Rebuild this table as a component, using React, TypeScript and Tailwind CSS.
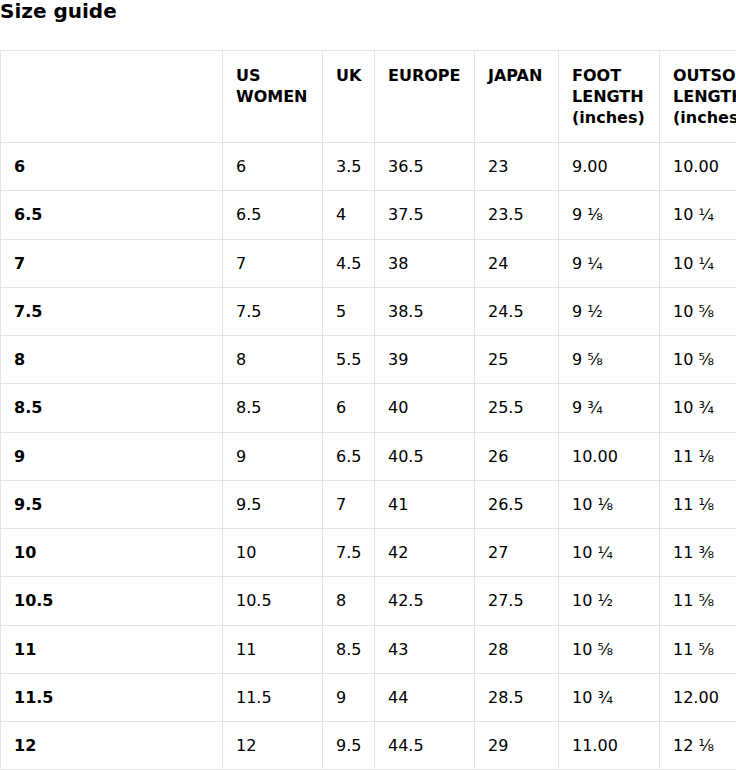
import React from "react";

const rows: string[][] = [
  ["6", "6", "3.5", "36.5", "23", "9.00", "10.00"],
  ["6.5", "6.5", "4", "37.5", "23.5", "9 ⅛", "10 ¼"],
  ["7", "7", "4.5", "38", "24", "9 ¼", "10 ¼"],
  ["7.5", "7.5", "5", "38.5", "24.5", "9 ½", "10 ⅝"],
  ["8", "8", "5.5", "39", "25", "9 ⅝", "10 ⅝"],
  ["8.5", "8.5", "6", "40", "25.5", "9 ¾", "10 ¾"],
  ["9", "9", "6.5", "40.5", "26", "10.00", "11 ⅛"],
  ["9.5", "9.5", "7", "41", "26.5", "10 ⅛", "11 ⅛"],
  ["10", "10", "7.5", "42", "27", "10 ¼", "11 ⅜"],
  ["10.5", "10.5", "8", "42.5", "27.5", "10 ½", "11 ⅝"],
  ["11", "11", "8.5", "43", "28", "10 ⅝", "11 ⅝"],
  ["11.5", "11.5", "9", "44", "28.5", "10 ¾", "12.00"],
  ["12", "12", "9.5", "44.5", "29", "11.00", "12 ⅛"],
];

const widths = [222, 100, 52, 100, 84, 101, 110];

const headers: React.ReactNode[] = [
  "",
  <>US<br />WOMEN</>,
  "UK",
  "EUROPE",
  "JAPAN",
  <>FOOT<br />LENGTH<br />(inches)</>,
  <>OUTSOLE<br />LENGTH<br />(inches)</>,
];

export default function App() {
  return (
    <div
      className="w-[736px] h-[770px] overflow-hidden bg-white text-black"
      style={{ fontFamily: '"DejaVu Sans", sans-serif' }}
    >
      <h1 className="text-[20px] leading-[22px] font-bold mb-[28px]">Size guide</h1>
      <table className="border-collapse table-fixed w-[769px]">
        <colgroup>
          {widths.map((w, i) => (
            <col key={i} style={{ width: w }} />
          ))}
        </colgroup>
        <thead>
          <tr>
            {headers.map((h, i) => (
              <th
                key={i}
                className="border border-[#e4e4e4] px-[13px] py-[14px] text-left align-top text-[16px] leading-[21px] font-bold whitespace-nowrap overflow-hidden"
              >
                {h}
              </th>
            ))}
          </tr>
        </thead>
        <tbody>
          {rows.map((r, ri) => (
            <tr key={ri}>
              {r.map((c, ci) => (
                <td
                  key={ci}
                  className={`border border-[#e4e4e4] px-[13px] py-[14px] text-left align-middle text-[16px] leading-[19.25px] whitespace-nowrap ${
                    ci === 0 ? "font-bold" : "font-normal"
                  }`}
                >
                  {c}
                </td>
              ))}
            </tr>
          ))}
        </tbody>
      </table>
    </div>
  );
}
